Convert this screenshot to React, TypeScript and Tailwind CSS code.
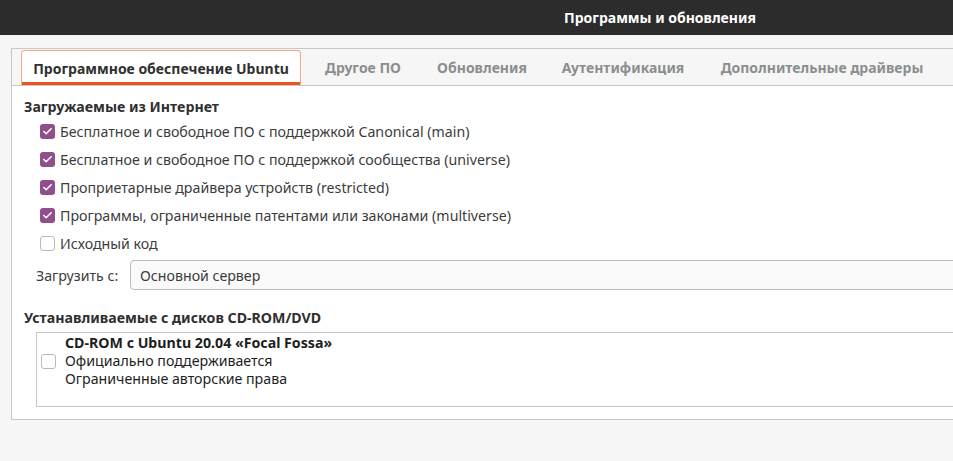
import { Check } from 'lucide-react';

const tabs = [
  { label: 'Программное обеспечение Ubuntu', width: 'w-[280px]', active: true },
  { label: 'Другое ПО', width: 'w-[102px]' },
  { label: 'Обновления', width: 'w-[114px]' },
  { label: 'Аутентификация', width: 'w-[146px]' },
  { label: 'Дополнительные драйверы', width: 'w-[230px]' },
];

const sources = [
  { label: 'Бесплатное и свободное ПО с поддержкой Canonical (main)', checked: true },
  { label: 'Бесплатное и свободное ПО с поддержкой сообщества (universe)', checked: true },
  { label: 'Проприетарные драйвера устройств (restricted)', checked: true },
  { label: 'Программы, ограниченные патентами или законами (multiverse)', checked: true },
  { label: 'Исходный код', checked: false },
];

function CheckBox({ checked }: { checked: boolean }) {
  if (checked) {
    return (
      <span className="flex h-[15px] w-[15px] shrink-0 items-center justify-center rounded-[3px] bg-[#924d8b]">
        <Check size={11} strokeWidth={3.5} className="text-white" />
      </span>
    );
  }
  return <span className="block h-[15px] w-[15px] shrink-0 rounded-[3px] border border-[#bdb9b6] bg-white" />;
}

export default function App() {
  return (
    <div className="h-[461px] w-[953px] overflow-hidden bg-[#f6f6f6] font-['Noto_Sans',sans-serif] text-[14.2px] text-[#3c3c3c]">
      <div className="flex h-[35px] items-center bg-[#2c2c2c] pl-[564px]">
        <span className="text-[14px] font-bold text-white">Программы и обновления</span>
      </div>

      <div className="ml-[11px] mt-[13px] h-[372px] w-[960px] border border-[#cdc7c2] bg-white">
        <div className="flex h-[37px] items-end gap-[11px] border-b border-[#cdc7c2] bg-[#f6f6f6] pl-[9px] text-[14px]">
          {tabs.map((t) =>
            t.active ? (
              <div
                key={t.label}
                className={`${t.width} flex h-[35px] items-center justify-center rounded-t-[4px] border border-b-0 border-[#f4a58c] bg-white font-bold text-[#303030] shadow-[inset_0_-3px_0_#e95420]`}
              >
                {t.label}
              </div>
            ) : (
              <div key={t.label} className={`${t.width} flex h-[35px] items-center justify-center font-bold text-[#8b8e8f]`}>
                {t.label}
              </div>
            ),
          )}
        </div>

        <div className="pl-[12px] pt-[10px]">
          <div className="font-bold text-[#303030]">Загружаемые из Интернет</div>
          <div className="mt-[5px] flex flex-col gap-[10px] pl-[16px]">
            {sources.map((s) => (
              <label key={s.label} className="flex h-[18px] items-center gap-[5px]">
                <CheckBox checked={s.checked} />
                <span>{s.label}</span>
              </label>
            ))}
          </div>

          <div className="mt-[8px] flex items-center pl-[12px]">
            <span className="w-[94px]">Загрузить с:</span>
            <div className="flex h-[30px] flex-1 items-center rounded-[4px] border border-[#c0bdb9] bg-[#fafafa] pl-[9px]">
              Основной сервер
            </div>
          </div>

          <div className="mt-[17px] font-bold text-[#303030]">Устанавливаемые с дисков CD-ROM/DVD</div>
          <div className="ml-[12px] mt-[3px] h-[75px] border border-[#c8c8c8] bg-white pl-[4px] pt-[1px]">
            <div className="flex items-start gap-[9px]">
              <div className="pt-[20px]">
                <CheckBox checked={false} />
              </div>
              <div className="leading-[18px] text-[#1e1e1e]">
                <div className="font-bold">CD-ROM c Ubuntu 20.04 «Focal Fossa»</div>
                <div>Официально поддерживается</div>
                <div>Ограниченные авторские права</div>
              </div>
            </div>
          </div>
        </div>
      </div>
    </div>
  );
}
